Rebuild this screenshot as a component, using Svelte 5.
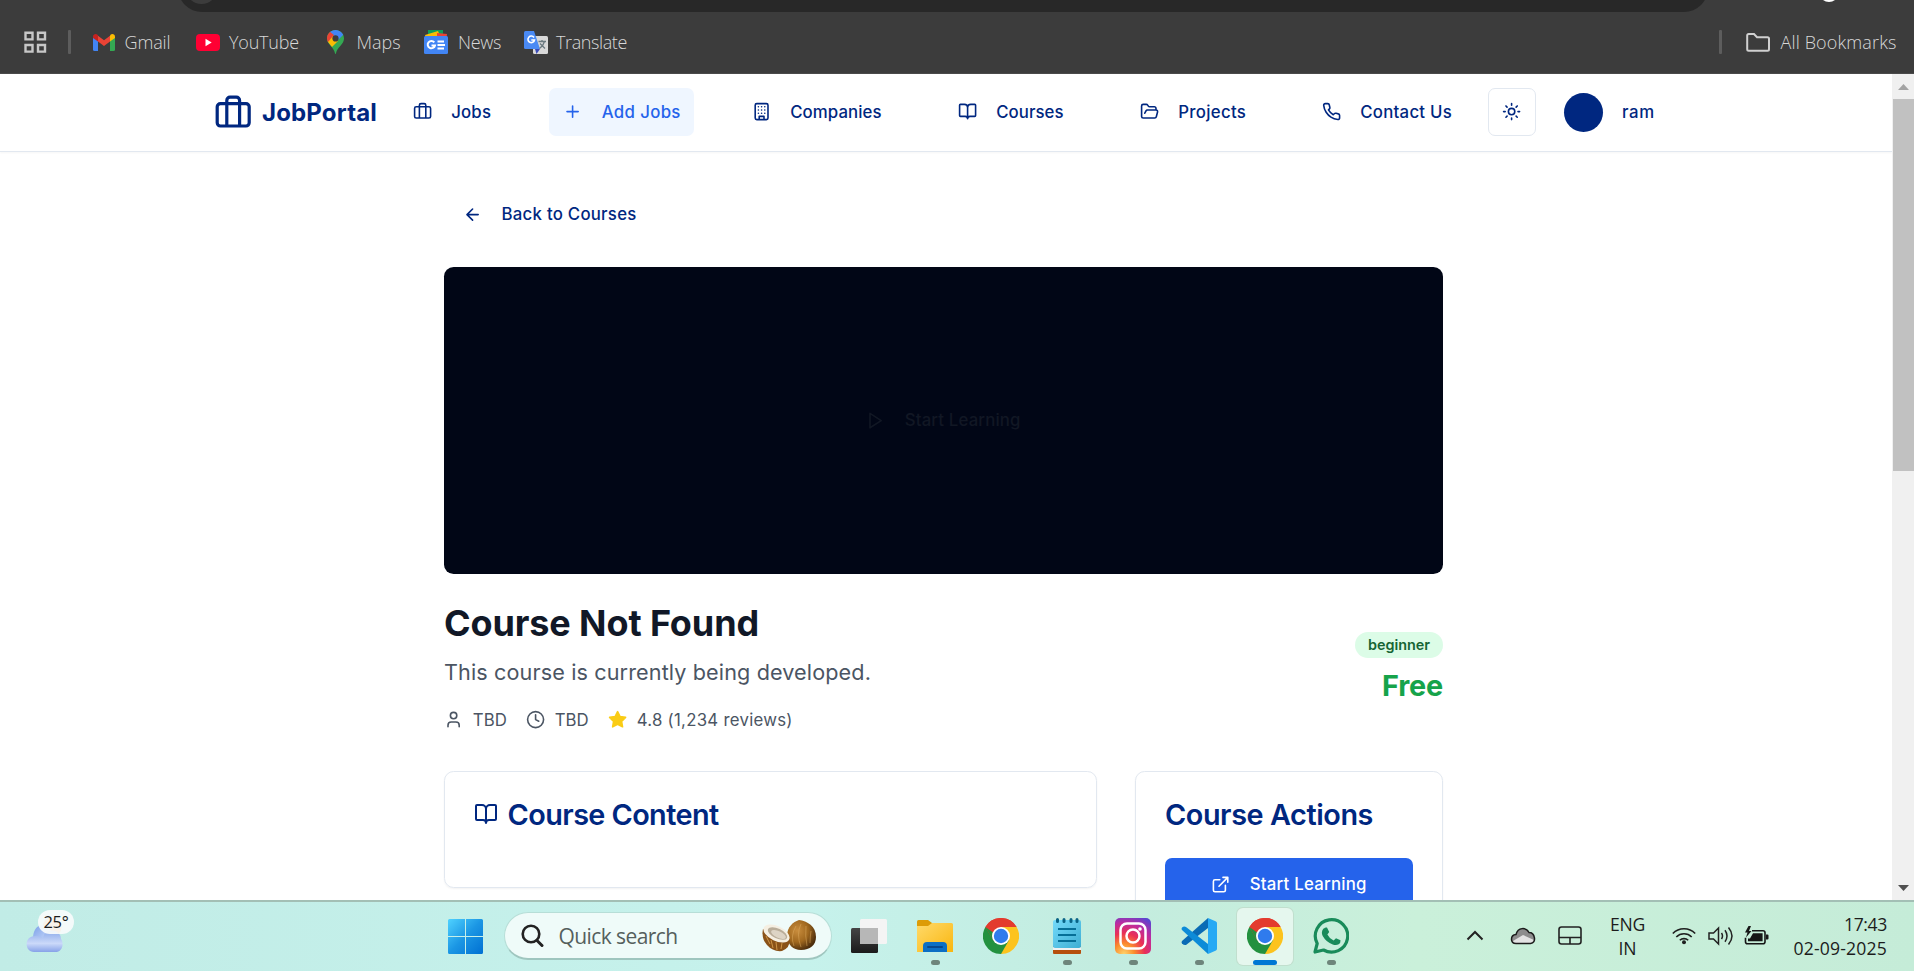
<script>
  const icons = {
    briefcase: 'M16 20V4a2 2 0 0 0-2-2h-4a2 2 0 0 0-2 2v16M4 6h16a2 2 0 0 1 2 2v10a2 2 0 0 1-2 2H4a2 2 0 0 1-2-2V8a2 2 0 0 1 2-2z',
    plus: 'M5 12h14M12 5v14',
    building: 'M6 2h12a2 2 0 0 1 2 2v16a2 2 0 0 1-2 2H6a2 2 0 0 1-2-2V4a2 2 0 0 1 2-2zM9 22v-4h6v4M8 6h.01M16 6h.01M12 6h.01M12 10h.01M12 14h.01M16 10h.01M16 14h.01M8 10h.01M8 14h.01',
    book: 'M12 7v14M3 18a1 1 0 0 1-1-1V4a1 1 0 0 1 1-1h5a4 4 0 0 1 4 4 4 4 0 0 1 4-4h5a1 1 0 0 1 1 1v13a1 1 0 0 1-1 1h-6a3 3 0 0 0-3 3 3 3 0 0 0-3-3z',
    folder: 'm6 14 1.5-2.9A2 2 0 0 1 9.24 10H20a2 2 0 0 1 1.94 2.5l-1.54 6a2 2 0 0 1-1.95 1.5H4a2 2 0 0 1-2-2V5a2 2 0 0 1 2-2h3.9a2 2 0 0 1 1.69.9l.81 1.2a2 2 0 0 0 1.67.9H18a2 2 0 0 1 2 2v2',
    phone: 'M22 16.92v3a2 2 0 0 1-2.18 2 19.79 19.79 0 0 1-8.63-3.07 19.5 19.5 0 0 1-6-6 19.79 19.79 0 0 1-3.07-8.67A2 2 0 0 1 4.11 2h3a2 2 0 0 1 2 1.72 12.84 12.84 0 0 0 .7 2.81 2 2 0 0 1-.45 2.11L8.09 9.91a16 16 0 0 0 6 6l1.27-1.27a2 2 0 0 1 2.11-.45 12.84 12.84 0 0 0 2.81.7A2 2 0 0 1 22 16.92z',
    sun: 'M16 12a4 4 0 1 1-8 0 4 4 0 0 1 8 0zM12 2v2M12 20v2m-7.07-17.07 1.41 1.41M17.66 17.66l1.41 1.41M2 12h2M20 12h2M6.34 17.66l-1.41 1.41M19.07 4.93l-1.41 1.41',
    arrow: 'm12 19-7-7 7-7M19 12H5',
    play: 'M5 3l14 9-14 9z',
    user: 'M19 21v-2a4 4 0 0 0-4-4H9a4 4 0 0 0-4 4v2M16 7a4 4 0 1 1-8 0 4 4 0 0 1 8 0z',
    clock: 'M22 12a10 10 0 1 1-20 0 10 10 0 0 1 20 0zM12 6v6l4 2',
    star: 'm12 2 3.09 6.26L22 9.27l-5 4.87 1.18 6.88L12 17.77l-6.18 3.25L7 14.14 2 9.27l6.91-1.01z',
    external: 'M15 3h6v6M10 14 21 3M18 13v6a2 2 0 0 1-2 2H5a2 2 0 0 1-2-2V8a2 2 0 0 1 2-2h6'
  };

  const nav = [
    { label: 'Jobs', icon: 'briefcase', w: 40 },
    { label: 'Add Jobs', icon: 'plus', w: 79, active: true },
    { label: 'Companies', icon: 'building', w: 91.5 },
    { label: 'Courses', icon: 'book', w: 67.5 },
    { label: 'Projects', icon: 'folder', w: 68 },
    { label: 'Contact Us', icon: 'phone', w: 92 }
  ];

  // Spreads the tracking of a label so that it fills the given width.
  function track(node, width) {
    const natural = node.getBoundingClientRect().width;
    const gap = (width - natural) / node.textContent.length;
    node.style.letterSpacing = gap.toFixed(3) + 'px';
  }
</script>

{#snippet icon(name, size, fill = 'none')}
  <svg class="icon" width={size} height={size} viewBox="0 0 24 24" {fill} stroke="currentColor" stroke-width="2" stroke-linecap="round" stroke-linejoin="round"><path d={icons[name]} /></svg>
{/snippet}

{#snippet chrome()}
  <svg width="36" height="36" viewBox="0 0 36 36">
    <path d="M18 18 2.4 9A18 18 0 0 1 33.6 9z" fill="#e33b2e" />
    <path d="M18 18V9h15.6A18 18 0 0 1 18 36z" fill="#fcc31e" />
    <path d="M18 18 25.8 22.5 18 36A18 18 0 0 1 2.4 9z" fill="#23913f" />
    <path d="M2.4 9 10.2 22.5 18 18V9h15.6A18 18 0 0 0 2.4 9z" fill="#e33b2e" />
    <path d="M2.4 9 10.2 22.5 15 18z" fill="#23913f" />
    <circle cx="18" cy="18" r="9" fill="#fff" /><circle cx="18" cy="18" r="7.2" fill="#2f7bed" />
  </svg>
{/snippet}

<div class="screen">
  <div class="browser">
    <div class="omnibox"><i></i></div>
    <div class="profile"></div>
    <div class="bookmarks">
      <svg class="apps" width="23" height="23" viewBox="0 0 23 23" fill="none" stroke="#c7c7c7" stroke-width="2.4"><path d="M1.5 1.8h7v6.6h-7zM14 1.8h7v6.6h-7zM1.5 14h7v6.6h-7zM14 14h7v6.6h-7z" /></svg>
      <span class="sep"></span>
      <a class="mark gmail" href="#gmail">
        <svg width="22" height="17" viewBox="0 0 22 17"><path d="M0 3v12.5Q0 17 1.5 17H5V6z" fill="#4285f4" /><path d="M22 3v12.5q0 1.5-1.5 1.5H17V6z" fill="#34a853" /><path d="M17 2v5.5L22 4V2.5C22 .3 19.3-.8 17.5.7z" fill="#fbbc04" /><path d="M5 7.5V1.7L11 6.2 17 1.7V7.5L11 12z" fill="#ea4335" /><path d="M0 2.5V4l5 3.5V1.2L4.5.7C2.7-.8 0 .3 0 2.5z" fill="#c5221f" /></svg>
        <span use:track={46}>Gmail</span>
      </a>
      <a class="mark youtube" href="#youtube">
        <svg width="24" height="17" viewBox="0 0 24 17"><rect width="24" height="17" rx="4" fill="#ff0033" /><path d="M9.5 4.8v7.4l6.2-3.7z" fill="#fff" /></svg>
        <span use:track={70}>YouTube</span>
      </a>
      <a class="mark maps" href="#maps">
        <svg width="17" height="24" viewBox="0 0 17 24"><clipPath id="pin"><path d="M8.5 0C3.8 0 0 3.7 0 8.4c0 6.1 6.5 8 8.1 15q.4 1 .8 0C10.5 16.400 17 14.5 17 8.4 17 3.7 13.2 0 8.500 0z" /></clipPath><g clip-path="url(#pin)"><path d="M0 0h17v24H0z" fill="#34a853" /><path d="M2 0h15v4L9 12 4 6z" fill="#4285f4" /><path d="M0 3 2.5 1.5 7 5 3 12H0z" fill="#ea4335" /><path d="m1 12 5-6 5 5-6 6z" fill="#fbbc04" /></g><circle cx="8.5" cy="8.4" r="3.1" fill="#3c3c3c" /></svg>
        <span use:track={44}>Maps</span>
      </a>
      <a class="mark news" href="#news">
        <svg width="24" height="24" viewBox="0 0 24 24"><path d="M4 0h15v7H4z" fill="#0f9d58" /><path d="M1 5 14 1l3 7H2z" fill="#fbbc04" /><path d="m13 3 10 1-.5 4H13z" fill="#ea4335" /><rect y="6" width="24" height="18" rx="1.5" fill="#4285f4" /><path d="M10.3 12.3A3.7 3.7 0 1 0 11 15.500H7.500M13.5 11.500H20M13.500 15H21M13.500 18.500H20" fill="none" stroke="#fff" stroke-width="2" /></svg>
        <span use:track={43}>News</span>
      </a>
      <a class="mark translate" href="#translate">
        <svg width="24" height="23" viewBox="0 0 24 23"><rect x="9" y="5" width="15" height="18" rx="1.5" fill="#d9d9d9" /><path d="m11 18 5 0-3.5 5z" fill="#3a4bb8" /><path d="M1.5 0H10l6 18H1.5Q0 18 0 16.5v-15Q0 0 1.500 0z" fill="#4a8af4" /><path d="M10 6.500A3.300 3.300 0 1 0 10.500 9H7.300" fill="none" stroke="#fff" stroke-width="1.6" /><path d="M14.500 10.500H22M18 9v1.500M20.500 10.500q-1 4-5 7M16 12.500l5 5" fill="none" stroke="#6b7a80" stroke-width="1.3" /></svg>
        <span use:track={71}>Translate</span>
      </a>
      <span class="sep right"></span>
      <a class="mark all" href="#all">
        <svg width="24" height="19" viewBox="0 0 24 19" fill="none" stroke="#d0d0d0" stroke-width="2"><path d="M1.200 2.500Q1.200 1 2.700 1H8l3 3.200h10.500Q23 4.200 23 5.700v10.600q0 1.500-1.500 1.500H2.700q-1.500 0-1.500-1.500z" /></svg>
        <span use:track={116}>All Bookmarks</span>
      </a>
    </div>
  </div>

  <div class="viewport">
    <div class="page">
      <header>
        <div class="brand">{@render icon('briefcase', 38.4)}<b use:track={115}>JobPortal</b></div>
        <nav>
          {#each nav as item}
            <div><a class="item" class:active={item.active} href="#nav">{@render icon(item.icon, 19.2)}<span use:track={item.w}>{item.label}</span></a></div>
          {/each}
        </nav>
        <button class="theme" aria-label="Theme">{@render icon('sun', 19.2)}</button>
        <span class="avatar"></span>
        <span class="name" use:track={33}>ram</span>
      </header>

      <main>
        <a class="back" href="#courses">{@render icon('arrow', 19.2)}<span use:track={135}>Back to Courses</span></a>
        <div class="hero">{@render icon('play', 19.2)}<span use:track={116}>Start Learning</span></div>
        <section class="intro">
          <div>
            <h1><span use:track={315}>Course Not Found</span></h1>
            <p><span use:track={427}>This course is currently being developed.</span></p>
            <div class="meta">
              <span class="fact">{@render icon('user', 19.2)}<span use:track={34}>TBD</span></span>
              <span class="fact">{@render icon('clock', 19.2)}<span use:track={34}>TBD</span></span>
              <span class="fact"><span class="gold">{@render icon('star', 19.2, 'currentColor')}</span><span use:track={156}>4.8 (1,234 reviews)</span></span>
            </div>
          </div>
          <div class="price">
            <span class="badge"><span use:track={62}>beginner</span></span>
            <strong><span use:track={61}>Free</span></strong>
          </div>
        </section>
        <section class="cards">
          <article class="content">
            <h2>{@render icon('book', 24)}<span use:track={211}>Course Content</span></h2>
          </article>
          <article class="actions">
            <h2><span use:track={208}>Course Actions</span></h2>
            <button class="start">{@render icon('external', 19.2)}<span use:track={117}>Start Learning</span></button>
          </article>
        </section>
      </main>
    </div>
    <div class="scrollbar">
      <svg width="11" height="6" viewBox="0 0 11 6"><path d="M0 6 5.500 0 11 6z" fill="#a3a3a3" /></svg>
      <div class="thumb"></div>
      <svg class="down" width="11" height="6" viewBox="0 0 11 6"><path d="M0 0h11L5.500 6z" fill="#505050" /></svg>
    </div>
  </div>

  <footer>
    <div class="weather">
      <svg width="38" height="36" viewBox="0 0 38 36">
        <defs><linearGradient id="cl" x1="0" y1="0" x2="1" y2="1"><stop offset="0" stop-color="#7b9fe8" /><stop offset=".5" stop-color="#a9c2f3" /><stop offset="1" stop-color="#dfe7fb" /></linearGradient><linearGradient id="cl2" x1="0" y1="0" x2="0" y2="1"><stop offset="0" stop-color="#8baaea" /><stop offset=".6" stop-color="#cbd9f9" /><stop offset="1" stop-color="#87a2e8" /></linearGradient></defs>
        <circle cx="26" cy="10" r="9.500" fill="#f47b20" />
        <path d="M7 20C8 5 22 5 26 16l-4 11H8z" fill="url(#cl)" />
        <path d="M8 35C-2 35-2 19 9 19q4-1 8 2c2-11 18-9 18 1 3 4 2 13-6 13z" fill="url(#cl2)" />
      </svg>
      <span class="temp"><span use:track={25}>25°</span></span>
    </div>

    <svg class="win" width="35" height="35" viewBox="0 0 35 35">
      <defs><linearGradient id="wg" x1="0" y1="0" x2="1" y2="1"><stop offset="0" stop-color="#4fd2ff" /><stop offset=".5" stop-color="#1b96e4" /><stop offset="1" stop-color="#0070d2" /></linearGradient></defs>
      <path d="M1.500 0H17v17H0V1.500Q0 0 1.500 0zM18 0h15.500Q35 0 35 1.500V17H18zM0 18h17v17H1.500Q0 35 0 33.500zM18 18h17v15.500q0 1.500-1.500 1.500H18z" fill="url(#wg)" />
    </svg>

    <div class="search">
      <svg width="23" height="24" viewBox="0 0 23 24" fill="none" stroke="#222" stroke-width="2.6" stroke-linecap="round"><circle cx="10" cy="10" r="8.3" /><path d="m16 16.500 5 5" stroke-width="3" /></svg>
      <span use:track={119}>Quick search</span>
      <svg class="coconut" width="54" height="32" viewBox="0 0 54 32">
        <defs><radialGradient id="co" cx=".35" cy=".35" r=".7"><stop offset="0" stop-color="#c98d3d" /><stop offset=".55" stop-color="#a0681f" /><stop offset="1" stop-color="#4a2c0c" /></radialGradient></defs>
        <path d="M25 16C25 7 31 2 37 0c8 1 17 6 17 17 0 8-6 13-15 13-8 0-13-5-14-14z" fill="url(#co)" />
        <path d="M34 6q-6 10-2 20M39 4q-5 10 0 23M44 6q-1 10 1 20M49 11q-1 6-1 12" stroke="#e0ae62" stroke-width=".8" fill="none" opacity=".6" />
        <path d="M1 9Q-1 18 5 25q6 7 15 6 8-3 8-12z" fill="#8a5218" />
        <path d="m4 16 4 8M9 20l2 8M14 22l1 8M20 23l-1 6" stroke="#cf9546" stroke-width="1" />
        <ellipse cx="14.500" cy="13.500" rx="14" ry="7.500" transform="rotate(25 14.500 13.500)" fill="#f5efe2" />
        <ellipse cx="15.500" cy="13.500" rx="10.500" ry="5" transform="rotate(25 15.500 13.500)" fill="#b9ad99" />
        <ellipse cx="16.500" cy="14.500" rx="8" ry="3.300" transform="rotate(25 16.500 14.500)" fill="#ddd4c5" />
      </svg>
    </div>

    <div class="tasks">
      <div class="task">
        <svg width="36" height="36" viewBox="0 0 36 36"><defs><linearGradient id="tv" x1="0" y1="0" x2="0" y2="1"><stop offset="0" stop-color="#454545" /><stop offset="1" stop-color="#1b1b1b" /></linearGradient></defs><rect y="10" width="27" height="25" rx="1.5" fill="url(#tv)" /><rect x="9" y="1" width="27" height="25" rx="1.5" fill="#f4f4f4" /><path d="M9 10h18v16H9z" fill="#b7b7b7" /></svg>
      </div>
      <div class="task">
        <svg width="36" height="36" viewBox="0 0 36 36"><defs><linearGradient id="fo" x1="0" y1="0" x2="1" y2="1"><stop offset="0" stop-color="#ffda6b" /><stop offset="1" stop-color="#f9b60f" /></linearGradient></defs><path d="M1.500 2H11l4 3v5H0V3.500Q0 2 1.500 2z" fill="#dd9c06" /><path d="M0 8h11l4-3h19.500Q36 5 36 6.500V34H0z" fill="url(#fo)" /><path d="M6 34v-6q0-4 4-4h16q4 0 4 4v6z" fill="#0c6fc4" /><path d="M11 29h14" stroke="#07478d" stroke-width="2" stroke-linecap="round" /></svg><i></i>
      </div>
      <div class="task">{@render chrome()}<i class="idle"></i></div>
      <div class="task">
        <svg width="36" height="36" viewBox="0 0 36 36"><defs><linearGradient id="np" x1="0" y1="0" x2="1" y2="1"><stop offset="0" stop-color="#74dafa" /><stop offset="1" stop-color="#3eaed3" /></linearGradient></defs><rect x="4" y="28" width="28" height="8" rx="1" fill="#b64f0d" /><path d="M4 29h28v3H4z" fill="#f0f0f0" /><rect x="4" y="2" width="28" height="28" rx="2" fill="url(#np)" /><path d="M9 11h18M9 17h18M9 23h18" stroke="#066f97" stroke-width="2" /><path d="M8.500 1.500v2M15 1.500v2M22 1.500v2M28 1.500v2" stroke="#096386" stroke-width="3" stroke-linecap="round" /></svg><i></i>
      </div>
      <div class="task">
        <svg width="36" height="36" viewBox="0 0 36 36"><defs><radialGradient id="ig" cx=".25" cy="1" r="1.15"><stop offset="0" stop-color="#ffd36a" /><stop offset=".25" stop-color="#fb8d2d" /><stop offset=".5" stop-color="#ea3055" /><stop offset=".75" stop-color="#bd2ba0" /><stop offset="1" stop-color="#5a45d0" /></radialGradient></defs><rect width="36" height="36" rx="5" fill="url(#ig)" /><g fill="none" stroke="#fff" stroke-width="2.5"><rect x="5.5" y="5.5" width="25" height="25" rx="6.5" /><circle cx="18" cy="18" r="6.5" /></g><circle cx="25" cy="11" r="1.8" fill="#fff" /></svg><i></i>
      </div>
      <div class="task">
        <svg width="36" height="36" viewBox="0 0 36 36"><path d="M1 23 27 0v10L5 27q-2 .5-4-1.500-1-1.500 0-2.500z" fill="#0a6bb5" /><path d="M1 12q-1-1 0-2.500Q3 8 5 9l22 17v10z" fill="#0d8bd8" /><path d="m27 0 8 3.500q1 .5 1 1.800v25.400q0 1.300-1 1.800L27 36z" fill="#27a9f4" /></svg><i></i>
      </div>
      <div class="task current">{@render chrome()}<i></i></div>
      <div class="task">
        <svg width="36" height="36" viewBox="0 0 36 36"><path d="m2 34 2.200-8.500A16.200 16.200 0 1 1 10.500 32z" fill="none" stroke="#198b5a" stroke-width="3.2" stroke-linejoin="round" /><path d="M11 10.500q1-1.500 3-1l2.200 4.500-1.800 2.500q2 4 6.200 6l2.400-2.300 4.500 2q.3 2.500-1.800 4-2.300 1.500-6 .3-6.500-2.300-10-8.500-2-4 .8-7.500z" fill="#198b5a" /></svg><i></i>
      </div>
    </div>

    <div class="tray">
      <svg class="chev" width="18" height="11" viewBox="0 0 18 11" fill="none" stroke="#222" stroke-width="2"><path d="m1.500 9.500 7.500-7.500 7.500 7.500" /></svg>
      <svg class="cloud" width="26" height="18" viewBox="0 0 26 18"><path d="M6 16.500C0 16.500 0 8 6 7.500 8 0 16 0 19 5.500c6 0 8 10.500 1.500 11z" fill="#8d8d8d" /><path d="m3 14 10-6 11 5q-1 3-3.500 3.500H6Q4 16.500 3 14z" fill="#e3e3e3" /><path d="M6 16.500C0 16.500 0 8 6 7.500 8 0 16 0 19 5.500c6 0 8 10.500 1.500 11z" fill="none" stroke="#1c1c1c" stroke-width="1.5" /></svg>
      <svg class="pad" width="24" height="19" viewBox="0 0 24 19" fill="none" stroke="#222" stroke-width="1.6"><rect x="1" y="1" width="22" height="17" rx="2.5" /><path d="M1 11.500h22M12 11.500V18" /></svg>
      <div class="lang"><span use:track={35}>ENG</span><span use:track={18}>IN</span></div>
      <svg class="wifi" width="24" height="18" viewBox="0 0 24 18" fill="none" stroke="#1f1f1f" stroke-width="1.6"><path d="M.8 6.500a15.500 15.500 0 0 1 22.400 0M4.300 10a10.800 10.800 0 0 1 15.400 0M7.800 13.300a6 6 0 0 1 8.400 0" /><circle cx="12" cy="15.3" r="2" fill="#1f1f1f" stroke="none" /></svg>
      <svg class="sound" width="25" height="20" viewBox="0 0 25 20" fill="none" stroke="#222" stroke-width="1.5"><path d="M1 7h4.500L10.500 2v16L5.500 13H1zM13.500 7q2 3 0 6M17 4.300q4 5.700 0 11.400M20.500 1.500q7 8.500 0 17" /></svg>
      <svg class="battery" width="25" height="20" viewBox="0 0 25 20"><path d="M8 4.800H19q2 0 2 2v9q0 2-2 2H3.500q-2 0-2-2v-4" fill="none" stroke="#161616" stroke-width="1.6" /><path d="M9 7.300H18.600v8H4v-2.800h2zM22 8.500h1.500q1 0 1 1v3q0 1-1 1H22z" fill="#161616" /><path d="M4.500 0 1 6.500h2.500L2 11.500l5.500-6.500H5l2-5z" fill="#161616" /></svg>
      <div class="time"><span use:track={43}>17:43</span><span use:track={93.5}>02-09-2025</span></div>
    </div>
  </footer>
</div>

<style>
  :global(body) { overflow: hidden; }
  .screen { width: 1914px; height: 971px; display: flex; flex-direction: column; overflow: hidden; background: #fff; font-family: Inter, sans-serif; color: #002780; }
  .screen * { box-sizing: border-box; }
  .screen svg { flex: none; display: block; }
  .screen span, .screen b { white-space: nowrap; }
  a { color: inherit; text-decoration: none; }
  button { font: inherit; padding: 0; margin: 0; }

  .browser { position: relative; height: 74px; flex: none; background: #3c3c3c; border-bottom: 1px solid #4a4a4a; overflow: hidden; }
  .omnibox { position: absolute; left: 178px; top: -36px; width: 1530px; height: 48px; border-radius: 24px; background: #282828; }
  .omnibox i { position: absolute; left: 7px; top: 6px; width: 33px; height: 34px; border-radius: 50%; background: #3c3c3c; }
  .profile { position: absolute; left: 1819px; top: -18px; width: 20px; height: 20px; border-radius: 50%; background: #fff; }
  .bookmarks { height: 48px; margin-top: 18px; display: flex; align-items: center; font: 300 18px "Open Sans", sans-serif; color: #d8d8d8; }
  .apps { margin-left: 24px; }
  .sep { width: 3px; height: 24px; background: #5d5d5d; border-radius: 1px; margin-left: 21px; flex: none; }
  .mark { display: flex; align-items: center; flex: none; }
  .gmail { margin-left: 22px; gap: 9.5px; width: 103px; }
  .youtube { gap: 9px; width: 131px; }
  .maps { gap: 12.5px; width: 97px; }
  .news { gap: 10px; width: 100px; }
  .translate { gap: 8px; }
  .sep.right { margin-left: auto; }
  .all { gap: 11px; margin-left: 23.5px; margin-right: 17.5px; }

  .viewport { height: 826px; flex: none; display: flex; overflow: hidden; }
  .page { width: 1892px; height: 826px; flex: none; overflow: hidden; }
  header { height: 78px; border-bottom: 1px solid #e2e8f0; box-shadow: 0 1px 2px rgba(0, 0, 0, .04); display: flex; align-items: center; padding: 0 0 1px 214px; font-size: 16.8px; font-weight: 500; line-height: 24px; }
  .brand { display: flex; align-items: center; gap: 9.6px; width: 184.4px; flex: none; font-size: 24px; padding-top: 1.5px; }
  b { font-weight: 700; }
  nav { display: grid; grid-template-columns: 150.6px 188.4px 206px 182px 182px 180.6px; flex: none; }
  .item { display: inline-flex; align-items: center; gap: 19.2px; height: 48px; padding: 0 13.4px 0 14.4px; border-radius: 7px; }
  .item.active { background: #eff6ff; color: #2563eb; }
  .theme { width: 48px; height: 48px; flex: none; border: 1px solid #e2e8f0; border-radius: 7px; background: #fff; color: inherit; display: flex; align-items: center; justify-content: center; }
  .avatar { width: 39px; height: 39px; border-radius: 50%; background: #002780; margin: 0 19px 0 28px; flex: none; }

  main { width: 999px; margin-left: 444px; padding-top: 38.4px; }
  .back { display: flex; width: max-content; align-items: center; gap: 19.2px; height: 48px; padding: 0 19.2px; font-size: 16.8px; font-weight: 500; }
  .hero { margin-top: 28.6px; height: 307px; border-radius: 9.6px; background: #010616; color: #111724; display: flex; align-items: center; justify-content: center; gap: 19.2px; font-size: 16.8px; font-weight: 500; }
  .intro { height: 197px; display: flex; justify-content: space-between; }
  h1 { margin: 27px 0 0; font-size: 36px; line-height: 45px; font-weight: 700; color: #111827; }
  p { margin: 9px 0 0; font-size: 21.6px; line-height: 34px; color: #4b5563; }
  .meta { margin-top: 18px; display: flex; gap: 19.2px; font-size: 16.8px; line-height: 26px; color: #4b5563; }
  .fact { display: flex; align-items: center; gap: 9.6px; }
  .gold { color: #facc15; }
  .price { display: flex; flex-direction: column; align-items: flex-end; padding-top: 58px; }
  .badge { height: 26px; padding: 0 13px; border-radius: 13px; background: #dcfce7; color: #166534; font-size: 14.4px; font-weight: 600; line-height: 26px; }
  strong { margin-top: 10px; font-size: 28.8px; line-height: 36px; font-weight: 700; color: #16a34a; }

  .cards { display: grid; grid-template-columns: 653px 308px; gap: 38px; align-items: start; }
  article { border: 1px solid #e2e8f0; border-radius: 9.6px; box-shadow: 0 1px 2px rgba(0, 0, 0, .05); padding: 28px 29px; }
  .content { height: 117px; }
  .actions { height: 240px; }
  h2 { margin: 0; display: flex; align-items: center; gap: 9.6px; font-size: 28.8px; line-height: 29px; font-weight: 600; }
  .start { width: 248px; height: 52.8px; margin-top: 29px; border: 0; border-radius: 7px; background: #2563eb; color: #fff; display: flex; align-items: center; justify-content: center; gap: 19.2px; font-size: 16.8px; font-weight: 500; }

  .scrollbar { width: 22px; background: #f0f0f0; display: flex; flex-direction: column; align-items: center; padding-top: 10px; }
  .thumb { width: 21px; height: 372px; margin: 9px 0 0 1px; background: #c1c1c1; }
  .down { margin: auto 0 9px; }

  footer { height: 71px; flex: none; position: relative; border-top: 2px solid #a3bfb5; background: linear-gradient(90deg, #c1ece6, #c6f2ec 42%, #c3ecdf 58%, #caf0da 74%, #c5ecd8); display: flex; align-items: flex-start; font-family: "Open Sans", "Noto Sans", sans-serif; color: #1c1c1c; }
  .weather { position: relative; width: 50px; height: 46px; margin: 8px 0 0 26px; padding-top: 7px; flex: none; }
  .temp { position: absolute; left: 12px; top: 0; width: 36px; height: 24px; border-radius: 12px; background: rgba(247, 251, 251, .93); text-align: center; font-size: 16.5px; line-height: 23px; }
  .win { margin: 17px 0 0 372px; }
  .search { width: 328px; height: 48px; margin: 10px 0 0 21px; border-radius: 24px; border: 1.5px solid #b7ded7; border-bottom: 2px solid #9fc6bf; background: #effbf9; display: flex; align-items: center; padding: 0 15px 0 16px; font-size: 21px; color: #555f5d; flex: none; }
  .search > span { margin-left: 14.5px; }
  .coconut { margin-left: auto; }
  .tasks { display: flex; gap: 10px; margin: 6px 0 0 9px; flex: none; }
  .task { position: relative; width: 56px; height: 57px; border-radius: 6px; display: flex; justify-content: center; padding-top: 10px; }
  .task i { position: absolute; bottom: 0; width: 9px; height: 5px; border-radius: 3px; background: #6e857b; }
  .task i.idle { display: none; }
  .current { background: #e5f7ee; box-shadow: 0 0 0 1px #c1dfce; }
  .current i { width: 24px; background: #0078d4; }
  .tray { flex: 1; display: flex; align-items: center; height: 48px; margin: 9.5px 27px 0 0; font-size: 17.6px; line-height: 24px; }
  .chev { margin-left: 107px; }
  .cloud { margin-left: 26px; }
  .pad { margin-left: 22px; }
  .lang, .time { display: flex; flex-direction: column; flex: none; }
  .lang { align-items: center; margin-left: 28px; }
  .wifi { margin-left: 27px; }
  .sound { margin-left: 12px; }
  .battery { margin-left: 10.5px; }
  .time { align-items: flex-end; margin-left: auto; }
</style>
